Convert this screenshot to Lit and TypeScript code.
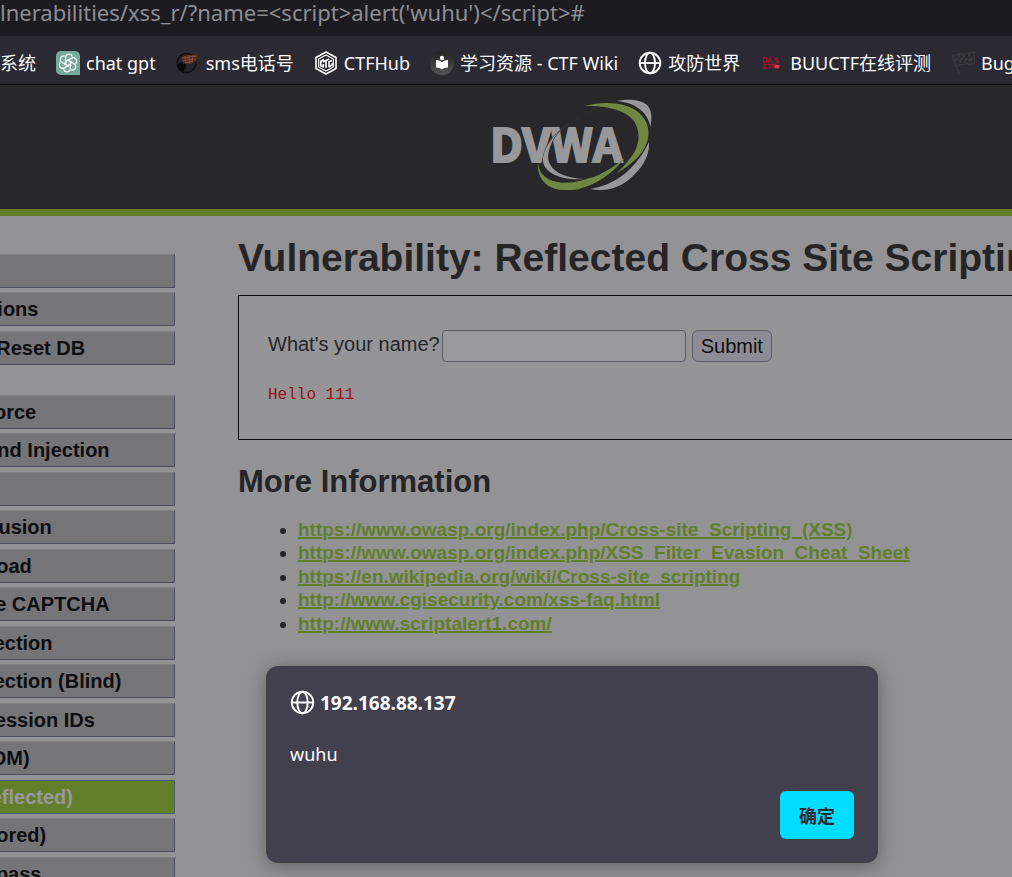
import { LitElement, html, css, svg } from "lit";
import { customElement } from "lit/decorators.js";

const globe = svg`
  <g fill="none" stroke="currentColor" stroke-width="1.9">
    <circle cx="12" cy="12" r="10.3"/>
    <ellipse cx="12" cy="12" rx="5" ry="10.3"/>
    <path d="M1.7 12h20.6"/>
  </g>`;

const icons = {
  gpt: svg`
    <path d="M5 0h14a5 5 0 0 1 5 5v19H5a5 5 0 0 1-5-5V5a5 5 0 0 1 5-5z" fill="#74a99b"/>
    <g fill="none" stroke="#fff" stroke-width="1.3" stroke-linejoin="round">
      ${[0, 60, 120, 180, 240, 300].map(
        (a) => svg`<path transform="rotate(${a} 12 12)" d="M12 9.2 9.6 10.6V6.4c0-2.2 1.7-3.3 3.4-3.3 1.6 0 2.900 1 3.400 2.500M12 9.200l4.200 2.400"/>`
      )}
    </g>`,
  sms: svg`
    <circle cx="10.500" cy="12" r="9.500" fill="#24232b" stroke="#101014" stroke-width="1.500"/>
    <path d="M1.500 14c2-3 5-4 8-2l1 4-4 5c-3-1-5-4-5-7z" fill="#08080a"/>
    <path d="M5 7.500 9 4.500l13-1-2 7-6 3-7-1z" fill="#452c26"/>
    <path d="M6 7l15-2M7 9.500l13-1.500M9 12l8-1.500M9 5l1 7M13 4l1 8M17 4l-1 7" stroke="#8d4c30" stroke-width="1" fill="none"/>`,
  hub: svg`
    <g fill="none" stroke="#fff" stroke-linejoin="round">
      <path d="M12 1 22 6.500v11L12 23 2 17.500v-11z" stroke-width="1.600"/>
      <path d="M12 4 19.300 8v8L12 20 4.700 16V8z" stroke-width="1.200"/>
      <path d="M10 8.500 6.800 10.200v4.500l2.500 1.200v-3M9 11l6-3M12 10v7M18 9.500l-3 1.300v5l3-1.600v-2" stroke-width="1.600"/>
    </g>`,
  wiki: svg`
    <circle cx="12" cy="12" r="12" fill="url(#shade)"/>
    <defs><linearGradient id="shade" x1="0" y1="0" x2="0" y2="1">
      <stop stop-color="#222"/><stop offset="1" stop-color="#555"/>
    </linearGradient></defs>
    <circle cx="12" cy="7" r="2.200" fill="#fff"/>
    <path d="M6 9c2.500 0 4.500.700 6 2.200C13.500 9.700 15.500 9 18 9v7.500c-2.500 0-4.500.700-6 2-1.500-1.300-3.500-2-6-2z" fill="#fff"/>`,
  globe,
  das: svg`
    <g fill="none" stroke="#a3122c" stroke-width="1.300">
      <path d="M3.500 6.500h2c2 0 2 4.500 0 4.500h-2zM8 11.500l2-5 2 5M9 10h2M18 7h-2.500v2H18v2.500h-3M7 13.500H4V17h3M8 13.500h4M10 13.500V17.500M13 17.500v-4h3M13 15.500h2"/>
    </g>
    <path d="M15 13.500l5 1-1.500 3-4-.500z" fill="#e23550"/>`,
  flag: svg`
    <g fill="none" stroke="#3b3b3e" stroke-width="1.300">
      <path d="M1 3l7 20M2.500 5C8 1 12 5 23 1l.500 11c-6 3-11-1-17 3"/>
      <path d="M8 4l2 9M13 4l1.500 9M18 3l1 10M4 9c6-3 11 1 19-2" stroke-dasharray="3 2" stroke-width="2"/>
    </g>`,
};

const bookmarks: [keyof typeof icons | null, string][] = [
  [null, "系统"],
  ["gpt", "chat gpt"],
  ["sms", "sms电话号"],
  ["hub", "CTFHub"],
  ["wiki", "学习资源 - CTF Wiki"],
  ["globe", "攻防世界"],
  ["das", "BUUCTF在线评测"],
  ["flag", "Bugku"],
];

const menu = [
  ["Home", "Instructions", "Setup / Reset DB"],
  [
    "Brute Force", "Command Injection", "CSRF", "File Inclusion", "File Upload",
    "Insecure CAPTCHA", "SQL Injection", "SQL Injection (Blind)", "Weak Session IDs",
    "XSS (DOM)", "XSS (Reflected)", "XSS (Stored)", "CSP Bypass",
  ],
];

const links = [
  "https://www.owasp.org/index.php/Cross-site_Scripting_(XSS)",
  "https://www.owasp.org/index.php/XSS_Filter_Evasion_Cheat_Sheet",
  "https://en.wikipedia.org/wiki/Cross-site_scripting",
  "http://www.cgisecurity.com/xss-faq.html",
  "http://www.scriptalert1.com/",
];

@customElement("browser-bars")
class BrowserBars extends LitElement {
  static styles = css`
    :host { display: block; font-family: "Noto Sans", "Noto Sans CJK SC", sans-serif; }
    .address { height: 36px; background: #1c1b22; color: #8e8e92; font-size: 22px; line-height: 25px; white-space: nowrap; }
    .bookmarks { display: flex; gap: 20px; height: 48px; align-items: center; background: #2b2a33; border-bottom: 1px solid #0c0c0d; overflow: hidden; }
    .bookmark { display: flex; flex: none; align-items: center; gap: 6px; color: #fbfbfe; font-size: 18px; line-height: 24px; text-decoration: none; white-space: nowrap; padding-top: 6px; }
    .icon { width: 24px; height: 24px; flex: none; }
  `;
  render() {
    return html`
      <div class="address">lnerabilities/xss_r/?name=&lt;script&gt;alert('wuhu')&lt;/script&gt;#</div>
      <nav class="bookmarks">
        ${bookmarks.map(([icon, label]) => html`
          <a class="bookmark" href="#">
            ${icon ? html`<svg class="icon" viewBox="0 0 24 24" aria-hidden="true">${icons[icon]}</svg>` : ""}
            <span>${label}</span>
          </a>`)}
      </nav>`;
  }
}

@customElement("dvwa-logo")
class DvwaLogo extends LitElement {
  static styles = css`
    :host { display: block; }
    .logo { display: block; width: 160px; height: 92px; }
    .word { font: bold 46px "Noto Sans CJK SC", "Open Sans", sans-serif; fill: #98989a; stroke: #98989a; stroke-width: 2px; }
  `;
  render() {
    return html`
      <svg class="logo" viewBox="0 0 160 92" role="img" aria-label="DVWA">
        <g fill="#98989a">
          <path d="M125 2C135 0 148 0 155 6c5 5 5 12 3.500 22C156 15 146 4 125 2z"/>
          <path d="M157 43c1 14-7 26-17 35-12 11-26 15-42 12 27-4 47-22 59-47z"/>
          <text class="word" x="-2" y="63">DVWA</text>
          <path d="M102 11.700C86 17 68 28 61 41c-4 8-6 16-4 22 4 11 18 16 35 17-22 2-40-6-41-18-1-16 20-40 51-50.300z" stroke="#28282a" stroke-width="1" paint-order="stroke"/>
        </g>
        <g fill="#718641">
          <path d="M93 7c18-5 41-4 53 6 16 13 12 33-1 46-6 6-13 11-20 15 5-5 8-8 11-12 11-12 14-27 6-40C134 11 114 6 93 7z"/>
          <path d="M46 64c1 26 46 29 87-5-20 24-42 33-62 32-18-1-26-13-25-27z"/>
          <path d="M46 64c2 22 30 24 54 14L88 90c-26 4-43-6-42-26z"/>
        </g>
      </svg>`;
  }
}

@customElement("side-menu")
class SideMenu extends LitElement {
  static styles = css`
    :host { display: block; }
    .group { list-style: none; margin: 0 0 30px; padding: 0; }
    .item { margin-bottom: 4px; }
    .item:nth-child(even) { margin-bottom: 5px; }
    .item:last-child { margin-bottom: 0; }
    .link { display: block; box-sizing: border-box; height: 34px; padding-left: 9px; font-weight: bold; font-size: 20px; line-height: 32px; color: #0e0e11; background: #757577; border: 1px solid; border-color: #808083 #4a4e5f #4a4e5f #808083; text-decoration: none; white-space: nowrap; }
    .selected { background: #627e2b; color: #98989b; border-color: #4a5e6f; }
  `;
  render() {
    return menu.map((group) => html`
      <ul class="group">
        ${group.map((name) => html`
          <li class="item"><a class="link ${name === "XSS (Reflected)" ? "selected" : ""}" href="#">${name}</a></li>`)}
      </ul>`);
  }
}

@customElement("alert-dialog")
class AlertDialog extends LitElement {
  static styles = css`
    :host { display: flex; flex-direction: column; box-sizing: border-box; padding: 24px; border-radius: 12px; background: #42404d; color: #fbfbfe; box-shadow: 0 3px 20px rgba(20, 20, 26, 0.4); font: 18px/24px "Noto Sans", "Noto Sans CJK SC", sans-serif; }
    .origin { display: flex; align-items: center; gap: 5px; margin: 0; font-size: 19px; }
    .icon { width: 25px; height: 25px; }
    .message { margin: 27px 0 25px; }
    .ok { align-self: flex-end; width: 74px; height: 48px; border: 0; border-radius: 6px; background: #00ddff; color: #2b2a33; font: bold 18px "Noto Sans CJK SC", sans-serif; padding: 0; }
  `;
  render() {
    return html`
      <h2 class="origin"><svg class="icon" viewBox="0 0 24 24" aria-hidden="true">${globe}</svg>192.168.88.137</h2>
      <p class="message">wuhu</p>
      <button class="ok">确定</button>`;
  }
}

@customElement("app-root")
class AppRoot extends LitElement {
  static styles = css`
    :host { display: block; position: relative; height: 100vh; overflow: hidden; background: #939395; color: #252528; font-family: "Liberation Sans", Arial, sans-serif; }
    .banner { display: flex; justify-content: center; padding: 14px 0 18px 132px; background: #28282a; border-bottom: 7px solid #657e2a; }
    .page { display: flex; align-items: flex-start; gap: 63px; padding-top: 20px; }
    .menu { flex: none; width: 261px; margin: 18px 0 0 -86px; }
    .content { flex: 1; min-width: 0; margin-right: -40px; }
    .title { margin: 0; font-size: 39px; line-height: 44px; white-space: nowrap; }
    .panel { margin: 15px 0 24px; padding: 34px 29px 32px; border: 1px solid #0f0f12; background: #959598; }
    .form { display: flex; align-items: center; gap: 6px; font-size: 20px; }
    .label { line-height: 28px; margin-right: -4px; padding-bottom: 4px; white-space: nowrap; }
    .name { box-sizing: border-box; width: 244px; height: 32px; border: 1px solid #5c5b66; border-radius: 4px; background: #99989b; font-size: 20px; }
    .submit { height: 32px; padding: 0 8px; border: 1px solid #5c5b66; border-radius: 6px; background: #8d8c94; color: #0e0e11; font: 20px "Liberation Sans", Arial, sans-serif; }
    .hello { margin: 21px 0 0; color: #990c14; font: 16px/24px "Liberation Mono", monospace; }
    .subtitle { margin: 0; font-size: 31px; line-height: 36px; }
    .links { margin: 18px 0 0; padding-left: 60px; font-size: 19px; line-height: 23px; }
    .entry:nth-child(even) { margin-bottom: 1px; }
    .link { color: #627e2b; font-weight: bold; text-decoration-thickness: 2px; }
    .dialog { position: absolute; left: 266px; top: 666px; width: 612px; height: 197px; }
  `;
  render() {
    return html`
      <browser-bars></browser-bars>
      <header class="banner"><dvwa-logo></dvwa-logo></header>
      <div class="page">
        <side-menu class="menu"></side-menu>
        <main class="content">
          <h1 class="title">Vulnerability: Reflected Cross Site Scripting (XSS)</h1>
          <section class="panel">
            <form class="form">
              <label class="label" for="name">What's your name?</label>
              <input class="name" id="name" type="text">
              <button class="submit" type="button">Submit</button>
            </form>
            <pre class="hello">Hello 111</pre>
          </section>
          <h2 class="subtitle">More Information</h2>
          <ul class="links">
            ${links.map((url) => html`<li class="entry"><a class="link" href=${url}>${url}</a></li>`)}
          </ul>
        </main>
      </div>
      <alert-dialog class="dialog" role="dialog"></alert-dialog>`;
  }
}
